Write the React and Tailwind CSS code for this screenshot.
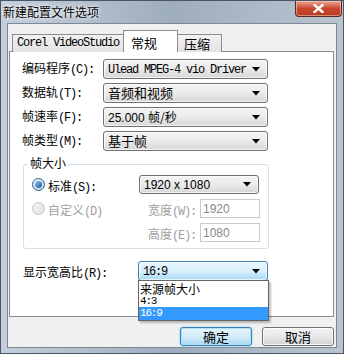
import React from 'react';

const CN = "font-['Noto_Sans_CJK_SC',sans-serif]";
const MONO = "font-['Liberation_Mono',monospace] tracking-[-1.2px]";

const Arrow = () => (
  <svg width="8" height="5" viewBox="0 0 8 5" className="shrink-0">
    <path d="M0 0 H8 L4 4.5 Z" fill="#000" />
  </svg>
);

// label: Chinese part + mnemonic part in the narrow mono face
const Label = ({ cn, key2, disabled }) => (
  <span className={`text-[12px] leading-none whitespace-nowrap ${disabled ? 'text-[#a0a0a0]' : 'text-black'}`}>
    <span className={CN}>{cn}</span>
    <span className={MONO}>{key2}</span>
  </span>
);

const Combo = ({ children, className = '', focused }) => (
  <div
    className={`flex items-center justify-between pl-[4px] pr-[7px] rounded-[3px] border ${
      focused
        ? 'border-[#3c7fb1] bg-gradient-to-b from-[#eaf6fd] via-[#d9f0fc] to-[#a7d9f5]'
        : 'border-[#707070] bg-gradient-to-b from-[#f3f3f3] via-[#ebebeb] to-[#d6d6d6]'
    } shadow-[inset_0_0_0_1px_rgba(255,255,255,0.7)] ${className}`}
  >
    <span className="text-[12px] leading-none text-black whitespace-nowrap">{children}</span>
    <Arrow />
  </div>
);

const App = () => {
  return (
    <div className="w-[344px] h-[354px] flex flex-col overflow-hidden border border-[#4a5563] bg-gradient-to-r from-[#c3ceda] via-[#9eadbe] to-[#b9c4d0]">
      {/* title bar */}
      <div className="h-[22px] flex items-start justify-between shrink-0">
        <span className={`${CN} text-[12px] leading-[20px] pl-[2px] pt-[1px] text-black [text-shadow:0_0_6px_#fff,0_0_3px_#fff]`}>
          新建配置文件选项
        </span>
        <div className="mr-[1px] w-[47px] h-[16px] rounded-b-[4px] border border-t-0 border-[#5b2a22] bg-gradient-to-b from-[#e8a493] via-[#c9462c] to-[#b83a24] shadow-[inset_0_0_0_1px_rgba(255,220,210,0.5)] flex items-center justify-center">
          <svg width="11" height="9" viewBox="0 0 11 9">
            <path d="M1.5 1 L9.5 8 M9.5 1 L1.5 8" stroke="#fff" strokeWidth="2.4" strokeLinecap="square" />
          </svg>
        </div>
      </div>

      {/* client area */}
      <div className="flex-1 ml-[6px] mr-[6px] mb-[5px] bg-[#f0f0f0] border border-[#7d8996] flex flex-col">
        {/* tabs */}
        <div className="flex items-end h-[27px] pl-[4px] relative z-10">
          <div className={`h-[18px] px-[4px] flex items-center border border-b-0 border-[#898c95] bg-gradient-to-b from-[#f2f2f2] to-[#e3e3e3] text-[12px] ${MONO} text-black mb-[-1px] pb-[1px]`}>
            Corel VideoStudio
          </div>
          <div className={`h-[22px] w-[55px] -ml-[1px] flex items-start pt-[2px] pl-[7px] border border-b-0 border-[#898c95] bg-white text-[13px] ${CN} text-black mb-[-1px]`}>
            常规
          </div>
          <div className={`h-[18px] w-[45px] -ml-[1px] flex items-center pl-[6px] border border-b-0 border-[#898c95] bg-gradient-to-b from-[#f2f2f2] to-[#e3e3e3] text-[13px] ${CN} text-black mb-[-1px]`}>
            压缩
          </div>
        </div>

        {/* tab panel */}
        <div className="ml-[1px] mr-[2px] h-[266px] border border-[#898c95] bg-white flex flex-col pl-[12px] pt-[7px]">
          <div className="grid grid-cols-[81px_165px] gap-y-[4px] items-center">
            <Label cn="编码程序" key2="(C):" />
            <Combo className="h-[20px]">
              <span className={MONO}>Ulead MPEG-4 vio Driver</span>
            </Combo>
            <Label cn="数据轨" key2="(T):" />
            <Combo className="h-[20px]">
              <span className={`${CN} text-[13px]`}>音频和视频</span>
            </Combo>
            <Label cn="帧速率" key2="(F):" />
            <Combo className="h-[20px]">
              <span className="font-['Liberation_Sans',sans-serif]">25.000 </span>
              <span className={CN}>帧/秒</span>
            </Combo>
            <Label cn="帧类型" key2="(M):" />
            <Combo className="h-[20px]">
              <span className={`${CN} text-[13px]`}>基于帧</span>
            </Combo>
          </div>

          {/* group box */}
          <div className="relative mt-[13px] ml-[1px] w-[246px] h-[85px] border border-[#d5dfe5] rounded-[3px] pl-[8px] pt-[10px]">
            <span className={`absolute -top-[8px] left-[4px] px-[2px] bg-white ${CN} text-[12px] leading-none text-black`}>帧大小</span>
            <div className="flex items-center h-[19px]">
              <span className="w-[13px] h-[13px] rounded-full border border-[#2c628b] bg-gradient-to-br from-[#e8f0f6] to-[#c4d5e3] flex items-center justify-center">
                <span className="w-[7px] h-[7px] rounded-full bg-gradient-to-br from-[#8fc4ec] to-[#1a5b96]" />
              </span>
              <span className="ml-[3px] w-[91px]">
                <Label cn="标准" key2="(S):" />
              </span>
              <Combo className="h-[19px] w-[120px] pl-[3px]">
                <span className="font-['Liberation_Sans',sans-serif]">1920 x 1080</span>
              </Combo>
            </div>
            <div className="flex items-center h-[19px] mt-[5px]">
              <span className="w-[13px] h-[13px] rounded-full border border-[#c6c6c6] bg-gradient-to-br from-[#f4f4f4] to-[#e3e3e3]" />
              <span className="ml-[3px] w-[100px]">
                <Label cn="自定义" key2="(D)" disabled />
              </span>
              <span className="w-[52px]">
                <Label cn="宽度" key2="(W):" disabled />
              </span>
              <div className="w-[60px] h-[19px] border border-[#c9c9c9] bg-white flex items-center pl-[2px] text-[12px] text-[#8a8a8a] font-['Liberation_Sans',sans-serif]">
                1920
              </div>
            </div>
            <div className="flex items-center h-[19px] mt-[5px]">
              <span className="w-[116px]" />
              <span className="w-[52px]">
                <Label cn="高度" key2="(E):" disabled />
              </span>
              <div className="w-[60px] h-[19px] border border-[#c9c9c9] bg-white flex items-center pl-[2px] text-[12px] text-[#8a8a8a] font-['Liberation_Sans',sans-serif]">
                1080
              </div>
            </div>
          </div>

          {/* aspect ratio */}
          <div className="flex items-center mt-[12px] ml-[1px] h-[20px]">
            <span className="w-[115px]">
              <Label cn="显示宽高比" key2="(R):" />
            </span>
            <div className="relative">
              <Combo className="h-[20px] w-[130px] pl-[3px]" focused>
                <span className={MONO}>16:9</span>
              </Combo>
              <div className="absolute left-0 top-[19px] w-[131px] bg-white border border-[#646464] shadow-[2px_2px_2px_rgba(0,0,0,0.25)] flex flex-col z-20">
                <div className={`${CN} pl-[1px] h-[15px] flex items-center text-[12px] leading-none text-black`}>来源帧大小</div>
                <div className={`${MONO} pl-[1px] h-[11px] flex items-center text-[11px] leading-none text-black`}>4:3</div>
                <div className={`${MONO} pl-[1px] h-[13px] flex items-center text-[11px] leading-none bg-[#3399ff] text-white`}>16:9</div>
              </div>
            </div>
          </div>
        </div>

        {/* buttons */}
        <div className="flex justify-end gap-[10px] mt-[10px] mr-[2px]">
          <button className={`w-[72px] h-[19px] rounded-[3px] border border-[#3c7fb1] bg-gradient-to-b from-[#e9f5fc] via-[#d4ecf9] to-[#a8d8f3] shadow-[inset_0_0_0_1px_#a9e0fa,0_0_2px_#6cc0ec] text-[13px] ${CN} text-black leading-none`}>
            确定
          </button>
          <button className={`w-[72px] h-[19px] rounded-[3px] border border-[#707070] bg-gradient-to-b from-[#f2f2f2] via-[#e8e8e8] to-[#d2d2d2] shadow-[inset_0_0_0_1px_rgba(255,255,255,0.8)] text-[13px] ${CN} text-black leading-none`}>
            取消
          </button>
        </div>
      </div>
    </div>
  );
};

export default App;
